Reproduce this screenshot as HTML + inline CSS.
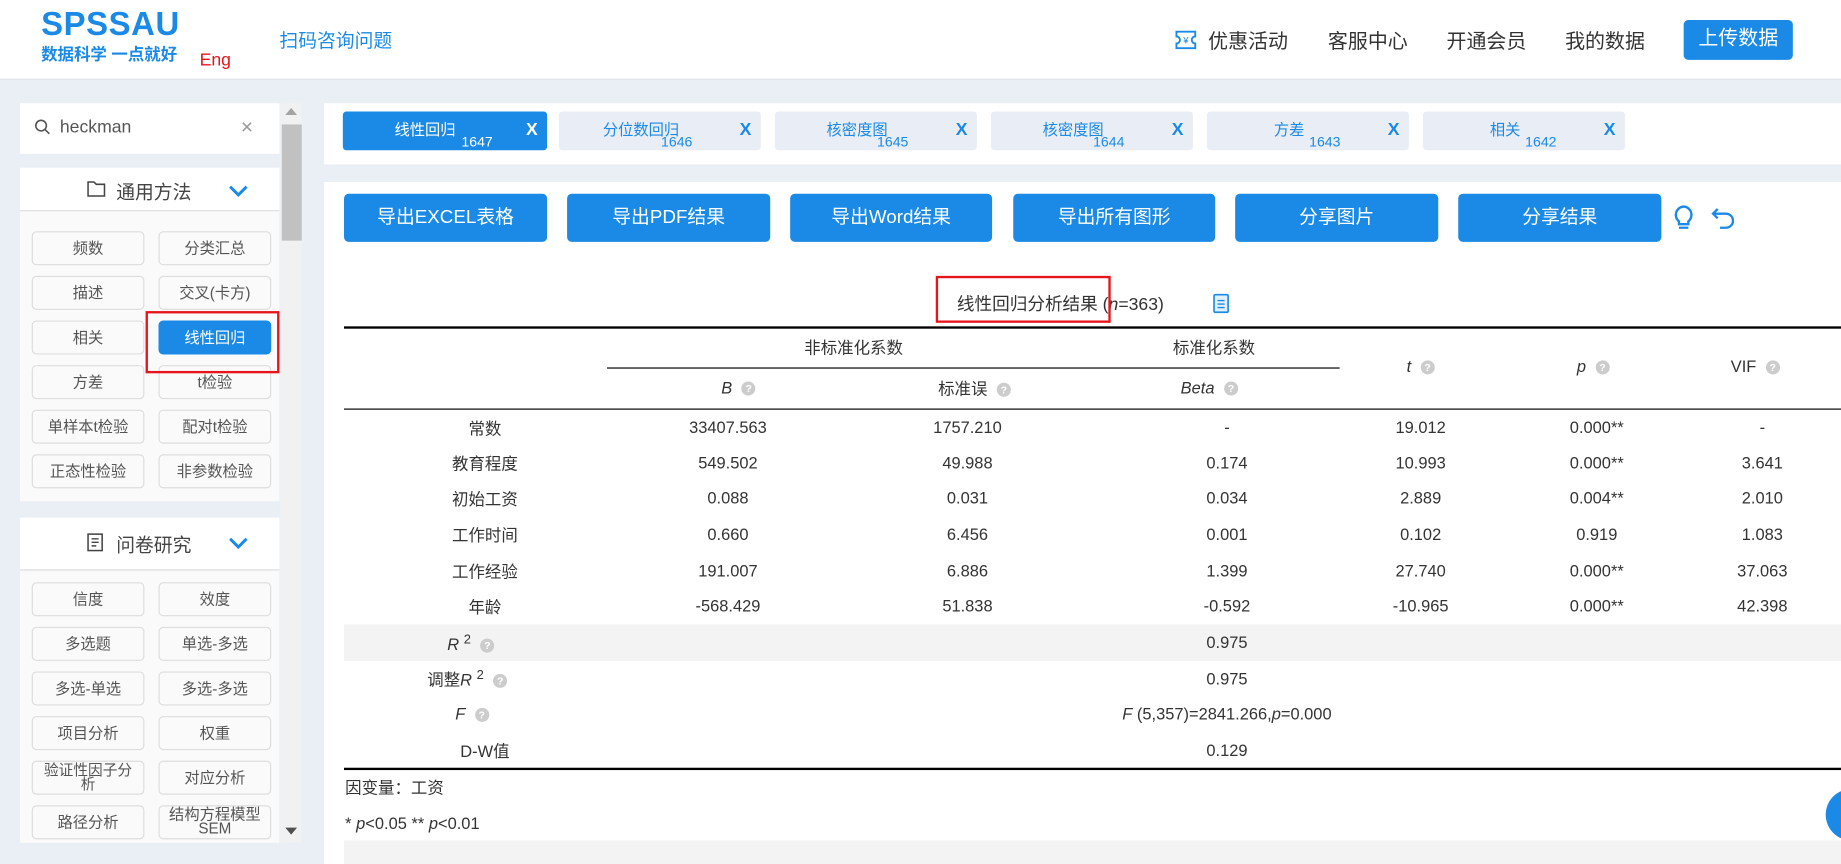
<!DOCTYPE html>
<html><head><meta charset="utf-8"><style>
*{box-sizing:border-box;margin:0;padding:0}
html,body{width:1841px;height:864px;overflow:hidden;background:#eaeef5}
#w{position:absolute;left:0;top:0;width:1568px;height:736px;transform:scale(1.1741,1.1739);transform-origin:0 0;font-family:"Liberation Sans","Noto Sans CJK SC",sans-serif;color:#333}
.a{position:absolute}
.hdr{left:0;top:0;width:1568px;height:68px;background:#fff;border-bottom:1px solid #dde2ea}
.nav{top:21px;font-size:17px;color:#333}
.btn{position:absolute;background:#1a8ae6;color:#fff;border-radius:4px;text-align:center}
.sb{position:absolute;width:96px;height:29px;border:1px solid #ddd;border-radius:4px;background:#fafafa;font-size:13px;color:#555;text-align:center;line-height:27px;white-space:nowrap;overflow:hidden}
.tab{position:absolute;top:95px;width:172px;height:33px;background:#e9edf5;border-radius:3px;color:#1a8ae6;font-size:13px}
.tab .t{position:absolute;left:0;width:140px;text-align:center;top:5px}
.tab .n{position:absolute;left:87px;top:19px;font-size:12px}
.tab .x{position:absolute;right:8px;top:7px;font-size:15px;font-weight:bold}
.eb{position:absolute;top:165px;height:41px;font-size:16px;line-height:41px}
.c{position:absolute;text-align:center;font-size:14px;color:#333;transform:translateX(-50%);white-space:nowrap}
.k{margin-top:-1px}
.q{display:inline-block;width:12px;height:12px;border-radius:50%;background:#ccc;color:#fff;font-size:9px;line-height:12px;text-align:center;margin-left:8px;vertical-align:1px;font-style:normal;font-weight:bold}
</style></head><body><div id="w">
<div class="a hdr"></div>
<div class="a" style="left:35px;top:5px;font-size:28px;font-weight:bold;color:#1a8ae6;letter-spacing:0.5px">SPSSAU</div>
<div class="a" style="left:35px;top:36px;font-size:14px;font-weight:bold;color:#1a8ae6">数据科学 一点就好</div>
<div class="a" style="left:170px;top:43px;font-size:15px;color:#e8141c">Eng</div>
<div class="a" style="left:238px;top:21px;font-size:16px;color:#1a8ae6">扫码咨询问题</div>
<svg class="a" style="left:1000px;top:25px" width="20" height="18" viewBox="0 0 20 18"><path d="M2 2h16v4a3 3 0 0 0 0 6v4H2v-4a3 3 0 0 0 0-6z" fill="none" stroke="#1a8ae6" stroke-width="1.6"/><text x="10" y="12" font-size="8" fill="#1a8ae6" text-anchor="middle" font-family="Liberation Sans">¥</text></svg>
<div class="a nav" style="left:1029px">优惠活动</div>
<div class="a nav" style="left:1131px">客服中心</div>
<div class="a nav" style="left:1232px">开通会员</div>
<div class="a nav" style="left:1333px">我的数据</div>
<div class="btn" style="left:1434px;top:17px;width:93px;height:34px;font-size:17px;line-height:32px">上传数据</div>

<div class="a" style="left:17px;top:88px;width:221px;height:43px;background:#fff"></div>
<svg class="a" style="left:29px;top:101px" width="14" height="14" viewBox="0 0 14 14"><circle cx="6" cy="6" r="4.5" fill="none" stroke="#555" stroke-width="1.4"/><path d="M9.5 9.5L13 13" stroke="#555" stroke-width="1.4"/></svg>
<div class="a" style="left:51px;top:100px;font-size:15px;color:#555">heckman</div>
<div class="a" style="left:205px;top:98px;font-size:18px;color:#999">×</div>
<div class="a" style="left:239px;top:88px;width:18px;height:630px;background:#f1f1f1"></div>
<div class="a" style="left:240px;top:106px;width:17px;height:99px;background:#c1c1c1"></div>
<div class="a" style="left:243px;top:92px;width:0;height:0;border-left:5px solid transparent;border-right:5px solid transparent;border-bottom:6px solid #a3a3a3"></div>
<div class="a" style="left:243px;top:705px;width:0;height:0;border-left:5px solid transparent;border-right:5px solid transparent;border-top:6px solid #505050"></div>

<div class="a" style="left:17px;top:143px;width:221px;height:284px;background:#fafafa"></div>
<div class="a" style="left:17px;top:143px;width:221px;height:37px;background:#fff;border-bottom:1px solid #ddd"></div>
<svg class="a" style="left:74px;top:154px" width="16" height="14" viewBox="0 0 16 14"><path d="M1 1h5l2 2h7v10H1z" fill="none" stroke="#444" stroke-width="1.3"/></svg>
<div class="a" style="left:99px;top:150px;font-size:16px;color:#444">通用方法</div>
<svg class="a" style="left:194px;top:157px" width="18" height="11" viewBox="0 0 18 11"><path d="M2 2l7 7 7-7" fill="none" stroke="#1a8ae6" stroke-width="2.5"/></svg>

<div class="sb" style="left:27px;top:197px">频数</div><div class="sb" style="left:135px;top:197px">分类汇总</div>
<div class="sb" style="left:27px;top:235px">描述</div><div class="sb" style="left:135px;top:235px">交叉(卡方)</div>
<div class="sb" style="left:27px;top:273px">相关</div><div class="sb" style="left:135px;top:273px;background:#1a8ae6;color:#fff;border-color:#1a8ae6">线性回归</div>
<div class="sb" style="left:27px;top:311px">方差</div><div class="sb" style="left:135px;top:311px">t检验</div>
<div class="sb" style="left:27px;top:349px">单样本t检验</div><div class="sb" style="left:135px;top:349px">配对t检验</div>
<div class="sb" style="left:27px;top:387px">正态性检验</div><div class="sb" style="left:135px;top:387px">非参数检验</div>
<div class="a" style="left:124px;top:265px;width:114px;height:53px;border:2px solid #e8141c"></div>

<div class="a" style="left:17px;top:441px;width:221px;height:277px;background:#fafafa"></div>
<div class="a" style="left:17px;top:441px;width:221px;height:45px;background:#fff;border-bottom:1px solid #ddd"></div>
<svg class="a" style="left:74px;top:454px" width="14" height="16" viewBox="0 0 14 16"><rect x="1" y="1" width="12" height="14" fill="none" stroke="#444" stroke-width="1.3"/><path d="M4 5h6M4 8h6M4 11h4" stroke="#444" stroke-width="1.2"/></svg>
<div class="a" style="left:99px;top:451px;font-size:16px;color:#444">问卷研究</div>
<svg class="a" style="left:194px;top:457px" width="18" height="11" viewBox="0 0 18 11"><path d="M2 2l7 7 7-7" fill="none" stroke="#1a8ae6" stroke-width="2.5"/></svg>
<div class="sb" style="left:27px;top:496px">信度</div><div class="sb" style="left:135px;top:496px">效度</div>
<div class="sb" style="left:27px;top:534px">多选题</div><div class="sb" style="left:135px;top:534px">单选-多选</div>
<div class="sb" style="left:27px;top:572px">多选-单选</div><div class="sb" style="left:135px;top:572px">多选-多选</div>
<div class="sb" style="left:27px;top:610px">项目分析</div><div class="sb" style="left:135px;top:610px">权重</div>
<div class="sb" style="left:27px;top:648px;line-height:12px;padding:1px 6px 0;white-space:normal;font-size:12.5px">验证性因子分析</div><div class="sb" style="left:135px;top:648px">对应分析</div>
<div class="sb" style="left:27px;top:686px">路径分析</div><div class="sb" style="left:135px;top:686px;line-height:12px;padding-top:1px;white-space:normal">结构方程模型SEM</div>

<div class="a" style="left:276px;top:88px;width:1292px;height:52px;background:#fff"></div>
<div class="tab" style="left:292px;width:174px;background:#1a8ae6;color:#fff"><span class="t">线性回归</span><span class="n" style="left:101px">1647</span><span class="x">X</span></div>
<div class="tab" style="left:476px"><span class="t">分位数回归</span><span class="n">1646</span><span class="x">X</span></div>
<div class="tab" style="left:660px"><span class="t">核密度图</span><span class="n">1645</span><span class="x">X</span></div>
<div class="tab" style="left:844px"><span class="t">核密度图</span><span class="n">1644</span><span class="x">X</span></div>
<div class="tab" style="left:1028px"><span class="t">方差</span><span class="n">1643</span><span class="x">X</span></div>
<div class="tab" style="left:1212px"><span class="t">相关</span><span class="n">1642</span><span class="x">X</span></div>

<div class="a" style="left:276px;top:155px;width:1292px;height:581px;background:#fff"></div>
<div class="btn eb" style="left:293px;width:173px">导出EXCEL表格</div>
<div class="btn eb" style="left:483px;width:173px">导出PDF结果</div>
<div class="btn eb" style="left:673px;width:172px">导出Word结果</div>
<div class="btn eb" style="left:863px;width:172px">导出所有图形</div>
<div class="btn eb" style="left:1052px;width:173px">分享图片</div>
<div class="btn eb" style="left:1242px;width:173px">分享结果</div>
<svg class="a" style="left:1425px;top:174px" width="18" height="24" viewBox="0 0 18 24"><path d="M9 2a7 7 0 0 0-4 12.5V17h8v-2.5A7 7 0 0 0 9 2z" fill="none" stroke="#1a8ae6" stroke-width="2"/><path d="M5 20h8" stroke="#1a8ae6" stroke-width="2"/></svg>
<svg class="a" style="left:1457px;top:176px" width="22" height="20" viewBox="0 0 22 20"><path d="M6 2L2 6l4 4M2 6h11a6 6 0 0 1 0 12H8" fill="none" stroke="#1a8ae6" stroke-width="2"/></svg>

<div class="a" style="left:815px;top:248px;font-size:15px;color:#333">线性回归分析结果 (<i>n</i>=363)</div>
<div class="a" style="left:797px;top:235px;width:149px;height:40px;border:2px solid #e8141c"></div>
<svg class="a" style="left:1032px;top:249px" width="16" height="18" viewBox="0 0 16 18"><rect x="2" y="2" width="12" height="15" rx="1" fill="#e3f0fc" stroke="#1a8ae6" stroke-width="1.4"/><path d="M5 7h6M5 10h6M5 13h6" stroke="#1a8ae6" stroke-width="1.2"/></svg>

<div class="a" style="left:293px;top:278px;width:1275px;height:2px;background:#000"></div>
<div class="a" style="left:517px;top:313px;width:624px;height:1px;background:#000"></div>
<div class="a" style="left:293px;top:348px;width:1275px;height:1px;background:#000"></div>
<div class="a" style="left:293px;top:532px;width:1275px;height:31px;background:#f3f3f3"></div>
<div class="a" style="left:293px;top:654px;width:1275px;height:2px;background:#000"></div>

<div class="c k" style="left:727px;top:287px">非标准化系数</div>
<div class="c k" style="left:1034px;top:287px">标准化系数</div>
<div class="c" style="left:629px;top:322px"><i>B</i><i class="q">?</i></div>
<div class="c k" style="left:830px;top:322px">标准误<i class="q">?</i></div>
<div class="c" style="left:1030px;top:322px"><i>Beta</i><i class="q">?</i></div>
<div class="c" style="left:1210px;top:304px"><i>t</i><i class="q">?</i></div>
<div class="c" style="left:1357px;top:304px"><i>p</i><i class="q">?</i></div>
<div class="c" style="left:1495px;top:304px">VIF<i class="q">?</i></div>

<div class="c k" style="left:413px;top:356px">常数</div><div class="c" style="left:620px;top:356px">33407.563</div><div class="c" style="left:824px;top:356px">1757.210</div><div class="c" style="left:1045px;top:356px">-</div><div class="c" style="left:1210px;top:356px">19.012</div><div class="c" style="left:1360px;top:356px">0.000**</div><div class="c" style="left:1501px;top:356px">-</div>
<div class="c k" style="left:413px;top:386px">教育程度</div><div class="c" style="left:620px;top:386px">549.502</div><div class="c" style="left:824px;top:386px">49.988</div><div class="c" style="left:1045px;top:386px">0.174</div><div class="c" style="left:1210px;top:386px">10.993</div><div class="c" style="left:1360px;top:386px">0.000**</div><div class="c" style="left:1501px;top:386px">3.641</div>
<div class="c k" style="left:413px;top:416px">初始工资</div><div class="c" style="left:620px;top:416px">0.088</div><div class="c" style="left:824px;top:416px">0.031</div><div class="c" style="left:1045px;top:416px">0.034</div><div class="c" style="left:1210px;top:416px">2.889</div><div class="c" style="left:1360px;top:416px">0.004**</div><div class="c" style="left:1501px;top:416px">2.010</div>
<div class="c k" style="left:413px;top:447px">工作时间</div><div class="c" style="left:620px;top:447px">0.660</div><div class="c" style="left:824px;top:447px">6.456</div><div class="c" style="left:1045px;top:447px">0.001</div><div class="c" style="left:1210px;top:447px">0.102</div><div class="c" style="left:1360px;top:447px">0.919</div><div class="c" style="left:1501px;top:447px">1.083</div>
<div class="c k" style="left:413px;top:478px">工作经验</div><div class="c" style="left:620px;top:478px">191.007</div><div class="c" style="left:824px;top:478px">6.886</div><div class="c" style="left:1045px;top:478px">1.399</div><div class="c" style="left:1210px;top:478px">27.740</div><div class="c" style="left:1360px;top:478px">0.000**</div><div class="c" style="left:1501px;top:478px">37.063</div>
<div class="c k" style="left:413px;top:508px">年龄</div><div class="c" style="left:620px;top:508px">-568.429</div><div class="c" style="left:824px;top:508px">51.838</div><div class="c" style="left:1045px;top:508px">-0.592</div><div class="c" style="left:1210px;top:508px">-10.965</div><div class="c" style="left:1360px;top:508px">0.000**</div><div class="c" style="left:1501px;top:508px">42.398</div>

<div class="c" style="left:401px;top:539px"><i>R</i> <sup style="font-size:11px">2</sup><i class="q">?</i></div>
<div class="c" style="left:1045px;top:539px">0.975</div>
<div class="c k" style="left:398px;top:570px">调整<i>R</i> <sup style="font-size:11px">2</sup><i class="q">?</i></div>
<div class="c" style="left:1045px;top:570px">0.975</div>
<div class="c" style="left:402px;top:600px"><i>F</i><i class="q">?</i></div>
<div class="c" style="left:1045px;top:600px"><i>F</i> (5,357)=2841.266,<i>p</i>=0.000</div>
<div class="c k" style="left:413px;top:631px">D-W值</div>
<div class="c" style="left:1045px;top:631px">0.129</div>

<div class="a" style="left:294px;top:661px;font-size:14px">因变量：工资</div>
<div class="a" style="left:294px;top:693px;font-size:14px">* <i>p</i>&lt;0.05 ** <i>p</i>&lt;0.01</div>
<div class="a" style="left:293px;top:716px;width:1275px;height:20px;background:#f3f3f3"></div>
<div class="a" style="left:1555px;top:672px;width:44px;height:44px;border-radius:50%;background:#1a8ae6"></div>
</div></body></html>
